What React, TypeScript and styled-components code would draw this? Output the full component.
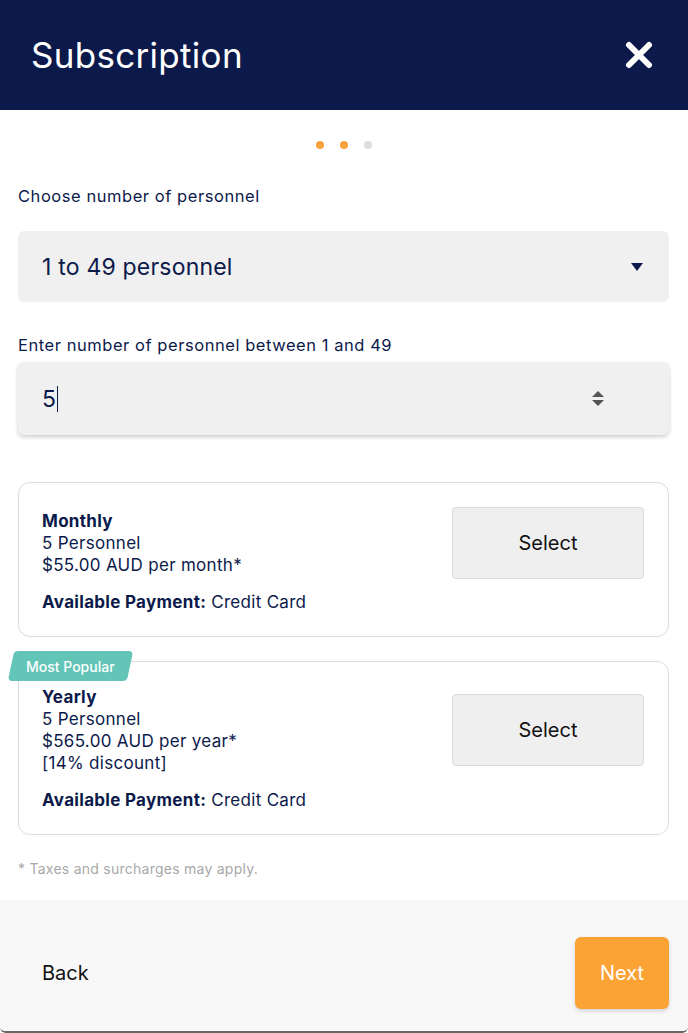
import React from "react";
import styled, { createGlobalStyle } from "styled-components";

const Global = createGlobalStyle`
  html, body { margin: 0; padding: 0; background: #fff; }
  body { font-family: Inter, Roboto, "Liberation Sans", sans-serif; }
  * { box-sizing: border-box; }
`;

const Modal = styled.div`
  width: 688px;
  height: 1033px;
  display: flex;
  flex-direction: column;
  background: #fff;
  border-bottom: 2px solid #666;
  border-radius: 0 0 6px 6px;
  overflow: hidden;
`;

const Header = styled.header`
  height: 110px;
  background: #0c1a4b;
  display: flex;
  align-items: center;
  justify-content: space-between;
  padding: 0 35px 0 31px;
  flex-shrink: 0;
`;

const Title = styled.h1`
  margin: 0;
  color: #fff;
  font-size: 35px;
  font-weight: 400;
  letter-spacing: 0.3px;
`;

const Close = styled.button`
  border: 0;
  background: none;
  padding: 0;
  width: 28px;
  height: 28px;
  display: flex;
  align-items: center;
  justify-content: center;
  cursor: pointer;
`;

const Body = styled.main`
  flex: 1;
  padding: 31px 19px 0 18px;
  display: flex;
  flex-direction: column;
`;

const Dots = styled.div`
  display: flex;
  justify-content: center;
  gap: 16px;
  margin-bottom: 37px;
`;

const Dot = styled.span<{ $active?: boolean }>`
  width: 8px;
  height: 8px;
  border-radius: 50%;
  background: ${(p) => (p.$active ? "#f9a13a" : "#dddddd")};
`;

const Label = styled.label<{ $gap: number }>`
  display: block;
  color: #0c1a4b;
  font-size: 16.5px;
  letter-spacing: 0.55px;
  line-height: 20px;
  margin-bottom: ${(p) => p.$gap}px;
`;

const Field = styled.div<{ $shadow?: boolean }>`
  height: ${(p) => (p.$shadow ? 73 : 71)}px;
  background: #f0f0f0;
  border-radius: 6px;
  display: flex;
  align-items: center;
  justify-content: space-between;
  padding: 0 24px;
  color: #0c1a4b;
  font-size: 23px;
  letter-spacing: 0.2px;
  box-shadow: ${(p) => (p.$shadow ? "0 2px 4px rgba(0,0,0,0.2)" : "none")};
`;

const Group = styled.div<{ $gap: number }>`
  margin-bottom: ${(p) => p.$gap}px;
`;

const Caret = styled.span`
  width: 0;
  height: 0;
  border-left: 6px solid transparent;
  border-right: 6px solid transparent;
  border-top: 8px solid #0c1a4b;
  margin-right: 2px;
`;

const Value = styled.span`
  display: flex;
  align-items: center;
`;

const Cursor = styled.span`
  display: inline-block;
  width: 1px;
  height: 26px;
  background: #0c1a4b;
  margin-left: 1px;
`;

const Spinner = styled.span`
  display: flex;
  flex-direction: column;
  gap: 3px;
  margin-right: 41px;
  &::before, &::after {
    content: "";
    width: 0;
    height: 0;
    border-left: 6px solid transparent;
    border-right: 6px solid transparent;
  }
  &::before { border-bottom: 6px solid #555; }
  &::after { border-top: 6px solid #555; }
`;

const Card = styled.section`
  position: relative;
  border: 1px solid #dcdcdc;
  border-radius: 12px;
  display: flex;
  justify-content: space-between;
  align-items: flex-start;
  margin-bottom: 24px;
`;

const Info = styled.div<{ $top: number }>`
  padding: ${(p) => p.$top}px 0 23px 23px;
  color: #0c1a4b;
  font-size: 17px;
  letter-spacing: 0.3px;
  line-height: 22px;
`;

const Plan = styled.div`
  font-weight: 700;
`;

const Payment = styled.div`
  margin-top: 15px;
  b { font-weight: 700; }
`;

const SelectBtn = styled.button<{ $top: number }>`
  width: 192px;
  height: 72px;
  margin: ${(p) => p.$top}px 24px 0 0;
  background: #efefef;
  border: 1px solid #dadada;
  border-radius: 4px;
  font-family: inherit;
  font-size: 20px;
  color: #111;
  cursor: pointer;
`;

const Badge = styled.span`
  position: absolute;
  left: -8px;
  top: -11px;
  height: 30px;
  padding: 0 15px 0 15px;
  display: flex;
  align-items: center;
  color: #fff;
  font-size: 14px;
  font-weight: 500;
  z-index: 1;
  &::before {
    content: "";
    position: absolute;
    inset: 0;
    background: #62c5b7;
    border-radius: 4px;
    transform: skewX(-12deg);
    z-index: -1;
  }
`;

const Note = styled.p`
  margin: 1px 0 0;
  color: #a8a8a8;
  font-size: 14px;
  letter-spacing: 0.25px;
`;

const Footer = styled.footer`
  height: 131px;
  background: #f8f8f8;
  display: flex;
  align-items: center;
  justify-content: space-between;
  padding: 14px 19px 0 42px;
  flex-shrink: 0;
`;

const Back = styled.button`
  border: 0;
  background: none;
  padding: 0;
  font-family: inherit;
  font-size: 20px;
  color: #111;
  cursor: pointer;
`;

const Next = styled.button`
  width: 94px;
  height: 72px;
  border: 0;
  border-radius: 6px;
  background: #fca335;
  color: #fff;
  font-family: inherit;
  font-size: 20px;
  box-shadow: 0 2px 4px rgba(0,0,0,0.15);
  cursor: pointer;
`;

export default function App() {
  return (
    <>
      <Global />
      <Modal>
        <Header>
          <Title>Subscription</Title>
          <Close aria-label="Close">
            <svg width="28" height="28" viewBox="0 0 28 28">
              <path d="M4 4L24 24M24 4L4 24" stroke="#fff" strokeWidth="6" strokeLinecap="round" />
            </svg>
          </Close>
        </Header>
        <Body>
          <Dots>
            <Dot $active />
            <Dot $active />
            <Dot />
          </Dots>
          <Label $gap={25}>Choose number of personnel</Label>
          <Group $gap={33}>
            <Field>
              <span>1 to 49 personnel</span>
              <Caret />
            </Field>
          </Group>
          <Label $gap={7}>Enter number of personnel between 1 and 49</Label>
          <Group $gap={47}>
            <Field $shadow>
              <Value>
                5<Cursor />
              </Value>
              <Spinner />
            </Field>
          </Group>
          <Card>
            <Info $top={27}>
              <Plan>Monthly</Plan>
              <div>5 Personnel</div>
              <div>$55.00 AUD per month*</div>
              <Payment>
                <b>Available Payment:</b> Credit Card
              </Payment>
            </Info>
            <SelectBtn $top={24}>Select</SelectBtn>
          </Card>
          <Card>
            <Badge>Most Popular</Badge>
            <Info $top={24}>
              <Plan>Yearly</Plan>
              <div>5 Personnel</div>
              <div>$565.00 AUD per year*</div>
              <div>[14% discount]</div>
              <Payment>
                <b>Available Payment:</b> Credit Card
              </Payment>
            </Info>
            <SelectBtn $top={32}>Select</SelectBtn>
          </Card>
          <Note>* Taxes and surcharges may apply.</Note>
        </Body>
        <Footer>
          <Back>Back</Back>
          <Next>Next</Next>
        </Footer>
      </Modal>
    </>
  );
}
